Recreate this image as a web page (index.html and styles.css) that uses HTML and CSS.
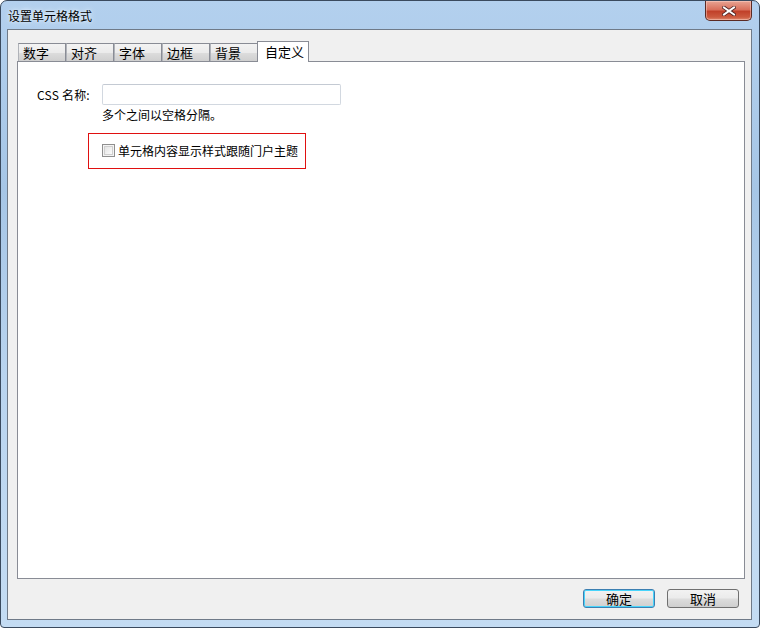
FILE: index.html
```html
<!DOCTYPE html>
<html lang="zh">
<head>
<meta charset="utf-8">
<title>设置单元格格式</title>
<link rel="stylesheet" href="styles.css">
</head>
<body>
<div class="window">
  <div class="titlebar">
    <span class="title">设置单元格格式</span>
    <button class="close" aria-label="关闭">
      <svg width="14" height="10" viewBox="0 0 14 10"><path d="M2 1.5 L12 8.5 M12 1.5 L2 8.5" stroke="#4a2020" stroke-width="3.6" stroke-linecap="square"/><path d="M2 1.5 L12 8.5 M12 1.5 L2 8.5" stroke="#fff" stroke-width="2" stroke-linecap="square"/></svg>
    </button>
  </div>
  <div class="client">
    <div class="tabs">
      <div class="tab">数字</div>
      <div class="tab">对齐</div>
      <div class="tab">字体</div>
      <div class="tab">边框</div>
      <div class="tab">背景</div>
      <div class="tab active">自定义</div>
    </div>
    <div class="panel">
      <div class="row">
        <label class="label">CSS 名称:</label>
        <div class="field">
          <input class="input" type="text">
          <div class="hint">多个之间以空格分隔。</div>
        </div>
      </div>
      <div class="follow">
        <span class="checkbox"></span>
        <span class="follow-text">单元格内容显示样式跟随门户主题</span>
      </div>
    </div>
    <div class="buttons">
      <button class="btn default">确定</button>
      <button class="btn">取消</button>
    </div>
  </div>
</div>
</body>
</html>
```

FILE: styles.css
```css
* { box-sizing: border-box; }
html, body { margin: 0; padding: 0; }
body {
  width: 760px;
  height: 628px;
  background: #ffffff;
  font-family: "Noto Sans CJK SC", "Liberation Sans", sans-serif;
  font-size: 12px;
  color: #000;
  overflow: hidden;
}
.window {
  width: 760px;
  height: 628px;
  border: 1px solid #3a4a5e;
  border-radius: 7px 7px 4px 4px;
  background: linear-gradient(180deg, #b3d0ee 0%, #a6c6e6 30%, #b9d4ef 60%, #c4dcf3 100%);
  display: flex;
  flex-direction: column;
  padding: 0 7px 7px 6px;
}
.titlebar {
  height: 28px;
  display: flex;
  align-items: flex-start;
  justify-content: space-between;
  flex-shrink: 0;
}
.title {
  margin-top: 6px;
  margin-left: 1px;
  line-height: 17px;
  font-size: 12px;
  color: #000;
  text-shadow: 0 0 6px #e8f2fc, 0 0 3px #e8f2fc;
}
.close {
  width: 47px;
  height: 20px;
  margin: 0;
  padding: 0;
  border: 1px solid #5b2b24;
  border-top: none;
  border-radius: 0 0 5px 5px;
  background: linear-gradient(180deg, #e8a493 0%, #d9705c 45%, #c1412a 55%, #cc5a3f 85%, #e08a70 100%);
  box-shadow: inset 0 0 0 1px rgba(255,220,210,0.45);
  display: flex;
  align-items: center;
  justify-content: center;
}
.client {
  flex: 1;
  border: 1px solid #6f7a88;
  background: #f0f0f0;
  display: flex;
  flex-direction: column;
  padding: 11px 7px 0 9px;
}
.tabs {
  display: flex;
  height: 20px;
  align-items: flex-end;
  padding-left: 1px;
  position: relative;
  z-index: 1;
}
.tab {
  width: 48px;
  height: 18px;
  border: 1px solid #898c95;
  border-bottom: none;
  border-left-color: #b0b3b9;
  background: linear-gradient(180deg, #f3f3f3 0%, #ebebeb 50%, #dddddd 51%, #cfcfcf 100%);
  padding: 0 0 0 4px;
  line-height: 17px;
  font-size: 13px;
  color: #000;
}
.tab.active {
  width: 52px;
  height: 21px;
  background: #ffffff;
  border-color: #898c95;
  padding-left: 7px;
  line-height: 19px;
  margin-bottom: -1px;
  margin-left: -1px;
}
.panel {
  width: 728px;
  height: 518px;
  border: 1px solid #898c95;
  background: #ffffff;
  padding: 22px 0 0 19px;
}
.row {
  display: flex;
  align-items: flex-start;
}
.label {
  font-family: "Noto Sans CJK SC", sans-serif;
  font-size: 12px;
  width: 65px;
  line-height: 16px;
  margin-top: 3px;
  letter-spacing: 0.2px;
}
.field { display: flex; flex-direction: column; }
.input {
  width: 239px;
  height: 21px;
  border: 1px solid #d2d8e0;
  border-top-color: #c4cad3;
  border-radius: 2px;
  background: #fff;
  margin: 0;
  padding: 0 3px;
  outline: none;
}
.hint {
  margin-top: 2px;
  line-height: 16px;
  font-size: 12px;
}
.follow {
  margin: 10px 0 0 51px;
  width: 218px;
  height: 36px;
  border: 1px solid #e01010;
  display: flex;
  align-items: center;
  padding: 0 0 1px 13px;
}
.checkbox {
  width: 13px;
  height: 13px;
  border: 1px solid #8f8f8f;
  background: linear-gradient(135deg, #dcdcdc 0%, #f4f4f4 60%, #ffffff 100%);
  box-shadow: inset 0 0 0 1px #f4f4f4, inset 0 0 0 2px #cfcfcf;
  margin-right: 3px;
  flex-shrink: 0;
}
.follow-text {
  font-size: 12px;
  line-height: 16px;
  white-space: nowrap;
}
.buttons {
  display: flex;
  justify-content: flex-end;
  gap: 12px;
  padding: 10px 5px 0 0;
}
.btn {
  width: 72px;
  height: 19px;
  margin: 0;
  padding: 0;
  border: 1px solid #707070;
  border-radius: 3px;
  background: linear-gradient(180deg, #f2f2f2 0%, #ebebeb 48%, #dddddd 52%, #cfcfcf 100%);
  font-family: "Noto Sans CJK SC", sans-serif;
  font-size: 13px;
  line-height: 16px;
  color: #000;
}
.btn.default {
  border-color: #3c7fb1;
  box-shadow: inset 0 0 0 1px #48d4fb;
}
```
